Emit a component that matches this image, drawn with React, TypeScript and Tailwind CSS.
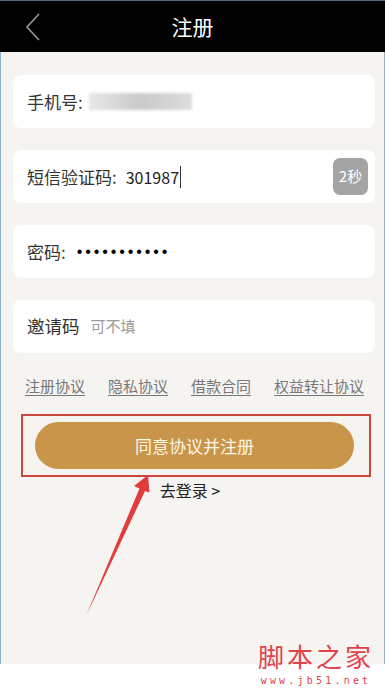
import React from 'react';

const font = { fontFamily: '"Noto Sans CJK SC", "Noto Sans", sans-serif' };

function Card({ children }: { children: React.ReactNode }) {
  return (
    <div className="ml-[12px] mr-[9px] h-[53px] rounded-[8px] bg-white flex items-center pl-[14px] pr-[7px] text-[17px] text-[#333]">
      {children}
    </div>
  );
}

export default function App() {
  return (
    <div className="relative w-[385px] h-[691px] bg-white overflow-hidden" style={font}>
      {/* header */}
      <div className="h-[52px] bg-black border-t border-[#5a6b78] flex items-center relative">
        <svg className="absolute left-[24px] top-[12px]" width="18" height="28" viewBox="0 0 18 28">
          <path d="M15 1 L3 14 L15 27" fill="none" stroke="#9a9a9a" strokeWidth="1.6" />
        </svg>
        <div className="flex-1 text-center text-white text-[21px] leading-none">注册</div>
      </div>

      {/* body */}
      <div className="h-[612px] bg-[#f6f4f1] border-x border-[#8fb3cf] pt-[23px] flex flex-col gap-[22px]">
        <Card>
          <span>手机号:</span>
          <div className="ml-[6px] w-[103px] h-[17px] bg-gradient-to-r from-[#e8e8e8] via-[#c9c9c9] to-[#dddddd] blur-[1.5px]" />
        </Card>
        <Card>
          <span>短信验证码:</span>
          <span className="ml-[9px] text-[16px] text-[#222]">301987</span>
          <span className="ml-[1px] w-px h-[22px] bg-[#333]" />
          <div className="ml-auto w-[35px] h-[37px] rounded-[7px] bg-[#a4a4a4] flex items-center justify-center text-[15px] text-white">
            2秒
          </div>
        </Card>
        <Card>
          <span>密码:</span>
          <span
            className="ml-[11px] text-[16px] tracking-[2.9px] text-black"
            style={{ fontFamily: '"Liberation Sans", sans-serif' }}
          >
            •••••••••••
          </span>
        </Card>
        <Card>
          <span className="text-[17.5px]">邀请码</span>
          <span className="ml-[11px] text-[15px] text-[#9a9a9a]">可不填</span>
        </Card>

        <div className="mt-[1px] ml-[24px] mr-[20px] flex justify-between text-[15px] leading-[20px] text-[#777]">
          <span className="underline underline-offset-[3px]">注册协议</span>
          <span className="underline underline-offset-[3px]">隐私协议</span>
          <span className="underline underline-offset-[3px]">借款合同</span>
          <span className="underline underline-offset-[3px]">权益转让协议</span>
        </div>

        <div className="flex flex-col items-center">
          <div className="mt-[4px] ml-[34px] mr-[30px] self-stretch h-[47px] rounded-full bg-[#c9954b] flex items-center justify-center text-[17px] text-[#fff6e6]">
            同意协议并注册
          </div>
          <div className="mt-[10px] text-[16px] leading-[22px] text-[#222] -ml-[5px]">去登录 &gt;</div>
        </div>
      </div>

      {/* annotation box */}
      <div className="absolute left-[21px] top-[414px] w-[350px] h-[63px] border-2 border-[#c9463f]" />

      {/* annotation arrow */}
      <svg className="absolute left-0 top-0 pointer-events-none" width="385" height="691" viewBox="0 0 385 691">
        <polygon
          points="148,475 134,486 139.5,488.5 86,616 145,491 149.5,492.5"
          fill="#e23b3d"
        />
      </svg>

      {/* watermark */}
      <div className="absolute left-[258px] top-[640px] flex flex-col items-center text-[#e0434a]">
        <div className="text-[26px] leading-[32px] tracking-[3px]" style={{ fontFamily: '"Noto Sans CJK SC", serif' }}>
          脚本之家
        </div>
        <div className="mt-[3px] text-[10px] leading-[12px] tracking-[3.2px]" style={{ fontFamily: '"DejaVu Sans Mono", monospace' }}>
          www.jb51.net
        </div>
      </div>
    </div>
  );
}
